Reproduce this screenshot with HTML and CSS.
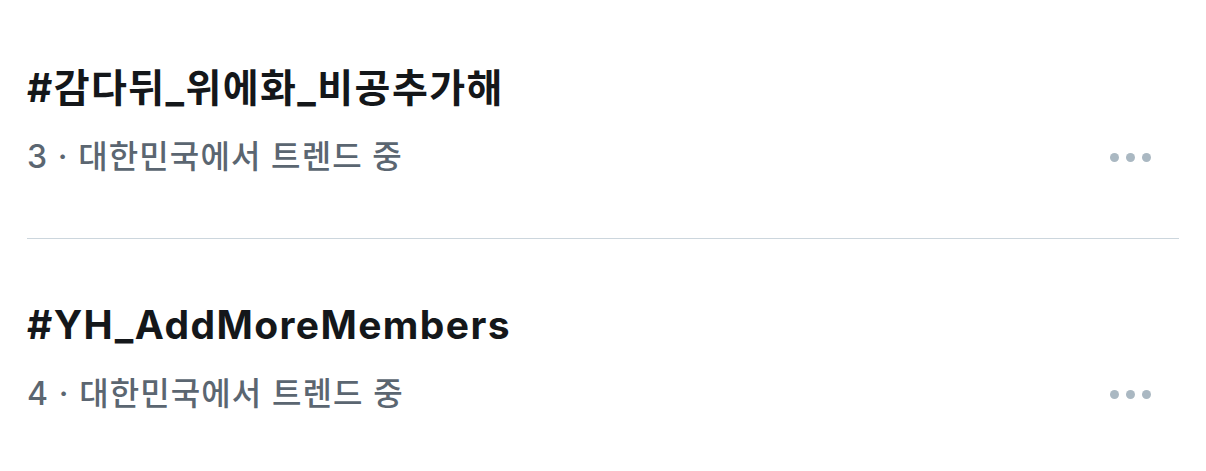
FILE: index.html
```html
<!DOCTYPE html>
<html lang="ko">
<head>
<meta charset="utf-8">
<link rel="stylesheet" href="styles.css">
</head>
<body>
<div class="list">
  <div class="trend">
    <div class="title">#감다뒤_위에화_비공추가해</div>
    <div class="meta">
      <span class="sub">3 · 대한민국에서 트렌드 중</span>
      <span class="more"><i></i><i></i><i></i></span>
    </div>
  </div>
  <div class="divider"></div>
  <div class="trend">
    <div class="title">#YH_AddMoreMembers</div>
    <div class="meta">
      <span class="sub">4 · 대한민국에서 트렌드 중</span>
      <span class="more"><i></i><i></i><i></i></span>
    </div>
  </div>
</div>
</body>
</html>
```
FILE: styles.css
```css
html, body {
  margin: 0;
  padding: 0;
  background: #ffffff;
}
body {
  width: 1206px;
  height: 471px;
  overflow: hidden;
  font-family: Inter, "Noto Sans CJK KR", sans-serif;
}
.list {
  padding: 63px 27px 0 27px;
}
.trend {
  display: flex;
  flex-direction: column;
}
.title {
  font-size: 39px;
  font-weight: 700;
  color: #14171a;
  line-height: 50px;
  letter-spacing: 1.4px;
}
.meta {
  display: flex;
  align-items: center;
  justify-content: space-between;
  margin-top: 24px;
}
.sub {
  font-size: 32px;
  font-weight: 500;
  color: #5b6671;
  line-height: 40px;
  letter-spacing: 1.1px;
}
.more {
  display: flex;
  gap: 7px;
  margin-right: 28px;
}
.more i {
  display: block;
  width: 9px;
  height: 9px;
  border-radius: 50%;
  background: #aab8c2;
}
.divider {
  height: 1px;
  background: #ccd6dd;
  margin: 61px 0 61px 0;
}
```
